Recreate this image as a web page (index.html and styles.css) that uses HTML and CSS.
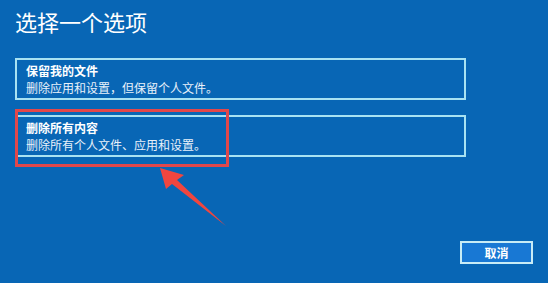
FILE: index.html
```html
<!DOCTYPE html>
<html lang="zh-CN">
<head>
    <meta charset="UTF-8">
    <title>选择一个选项</title>
    <link rel="stylesheet" href="styles.css">
</head>
<body>
    <div class="screen">
        <h1 class="title">选择一个选项</h1>
        <div class="options">
            <div class="option">
                <div class="option-name">保留我的文件</div>
                <div class="option-desc">删除应用和设置，但保留个人文件。</div>
            </div>
            <div class="option">
                <div class="option-name">删除所有内容</div>
                <div class="option-desc">删除所有个人文件、应用和设置。</div>
            </div>
        </div>
        <div class="footer">
            <button class="cancel">取消</button>
        </div>

        <div class="highlight"></div>
        <svg class="arrow" width="548" height="283" viewBox="0 0 548 283">
            <polygon points="160,168 184,175 177,180 226,226 172,184 166,189" fill="#f0463f"/>
        </svg>
    </div>
</body>
</html>
```

FILE: styles.css
```css
body {
    margin: 0;
    background-color: #0866b5;
    font-family: "Noto Sans CJK SC", "Noto Sans", sans-serif;
    color: #fff;
}

.screen {
    position: relative;
    width: 548px;
    height: 283px;
    overflow: hidden;
}

.title {
    margin: 0;
    padding: 5px 0 0 15px;
    font-size: 22px;
    font-weight: normal;
    line-height: 32px;
}

.options {
    display: flex;
    flex-direction: column;
    gap: 15px;
    margin: 21px 0 0 15px;
    width: 451px;
}

.option {
    box-sizing: border-box;
    height: 42px;
    border: 2px solid #a8e2f2;
    padding: 3px 9px 0;
}

.option-name {
    font-size: 12px;
    font-weight: bold;
    line-height: 16px;
}

.option-desc {
    font-size: 12px;
    line-height: 17px;
    color: #e8f1fa;
}

.footer {
    display: flex;
    justify-content: flex-end;
    padding: 84px 15px 0 0;
}

.cancel {
    width: 73px;
    height: 23px;
    border: 2px solid #c8ecf6;
    background-color: #1878d4;
    color: #fff;
    font-family: inherit;
    font-size: 12px;
    font-weight: bold;
    padding: 0;
}

.highlight {
    position: absolute;
    left: 15px;
    top: 109px;
    width: 208px;
    height: 52px;
    border: 3px solid #e2474a;
}

.arrow {
    position: absolute;
    left: 0;
    top: 0;
}
```
